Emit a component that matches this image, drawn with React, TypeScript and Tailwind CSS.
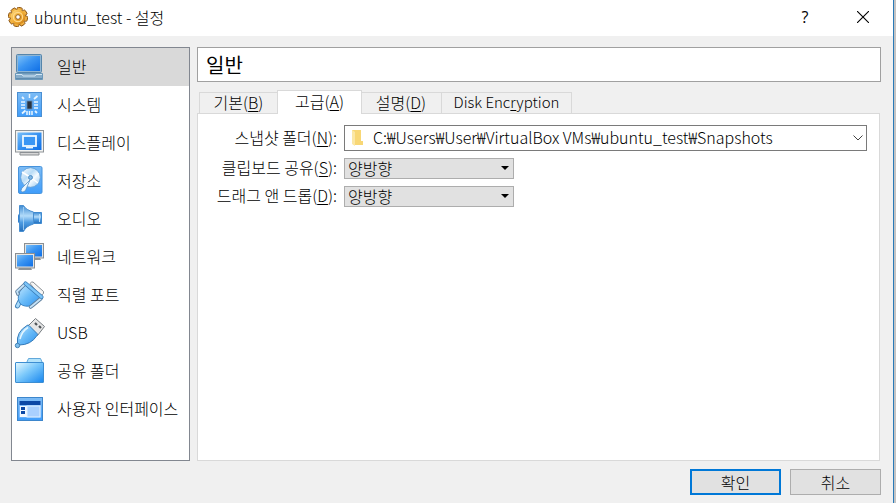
import { useState } from "react";
import type { ReactNode } from "react";

function Defs() {
  return (
    <svg className="absolute h-0 w-0" aria-hidden="true">
      <defs>
        <linearGradient id="screen" x1="0" y1="0" x2="1" y2="1">
          <stop offset="0" stopColor="#7cc0f8" />
          <stop offset="0.45" stopColor="#3b95f2" />
          <stop offset="1" stopColor="#0f6fe6" />
        </linearGradient>
        <linearGradient id="tile" x1="0" y1="0" x2="0" y2="1">
          <stop offset="0" stopColor="#7dbcf5" />
          <stop offset="1" stopColor="#3f9dfb" />
        </linearGradient>
        <linearGradient id="body" x1="0" y1="0" x2="1" y2="1">
          <stop offset="0" stopColor="#c4e8ff" />
          <stop offset="0.5" stopColor="#69bbf8" />
          <stop offset="1" stopColor="#2f92ee" />
        </linearGradient>
        <linearGradient id="cone" x1="0" y1="0" x2="0" y2="1">
          <stop offset="0" stopColor="#3c8ad2" />
          <stop offset="0.4" stopColor="#b4dcfa" />
          <stop offset="0.65" stopColor="#4e9ce2" />
          <stop offset="1" stopColor="#246fbc" />
        </linearGradient>
        <linearGradient id="folder" x1="0" y1="0" x2="1" y2="1">
          <stop offset="0" stopColor="#e8faff" />
          <stop offset="0.45" stopColor="#7cc9fb" />
          <stop offset="1" stopColor="#1685ee" />
        </linearGradient>
        <linearGradient id="disc" x1="0" y1="0" x2="1" y2="1">
          <stop offset="0" stopColor="#ffffff" />
          <stop offset="0.4" stopColor="#b9dcf6" />
          <stop offset="0.6" stopColor="#f5fbff" />
          <stop offset="1" stopColor="#8fc3ee" />
        </linearGradient>
        <linearGradient id="gear" x1="0" y1="0" x2="1" y2="1">
          <stop offset="0" stopColor="#ffe08a" />
          <stop offset="0.5" stopColor="#f2ad35" />
          <stop offset="1" stopColor="#c97a12" />
        </linearGradient>
      </defs>
    </svg>
  );
}

function Monitor({ x, y }: { x: number; y: number }) {
  return (
    <g transform={`translate(${x} ${y})`}>
      <path d="M4 15h12l1 2H3z" fill="#8f9498" />
      <rect x="0.5" y="0.5" width="19" height="14.5" fill="#e4e4e2" stroke="#8b8f93" />
      <rect x="2" y="2" width="16" height="11.5" fill="url(#screen)" />
    </g>
  );
}

const icons: Record<string, ReactNode> = {
  general: (
    <>
      <rect x="3.5" y="3.5" width="25" height="18" rx="1" fill="#8fb5d3" stroke="#5585ab" />
      <rect x="5" y="5" width="22" height="15" fill="url(#screen)" />
      <path d="M2.5 22.5h27v6h-27z" fill="#86acca" stroke="#6b98ba" />
      <path d="M3 23.5h6l1 1.500h12l1-1.500h6" fill="none" stroke="#d2e6f4" />
      <path d="M3 27.500h26" stroke="#5f8caf" />
    </>
  ),
  system: (
    <>
      <rect x="4.500" y="3.500" width="24" height="24" fill="url(#tile)" stroke="#4a8fd3" />
      <g stroke="#e9f6ff" strokeWidth="1.500" fill="none">
        <path d="M16.500 5v4M8 13h4M8 16h4M8 19h4M21 13h4M21 16h4M21 19h4M14 22v4M16.500 22v4M19 22v4" />
        <path d="M21 10l3.500-3M9 24.500l3.500-3M9 8l2 2M22 22l2 2" strokeWidth="1.800" />
      </g>
      <rect x="14" y="12" width="5" height="8" fill="#2a3440" stroke="#5c86ae" strokeWidth="0.800" />
    </>
  ),
  display: (
    <>
      <path d="M7 25.500h19v2.500H7z" fill="#d6d6d6" stroke="#898d90" />
      <rect x="2.500" y="3.500" width="28" height="21.500" fill="#f3f3f1" stroke="#8f9498" />
      <rect x="4.500" y="5.500" width="24" height="17.500" fill="url(#screen)" />
      <rect x="10" y="9" width="13" height="10" fill="#3a96f4" stroke="#eef8ff" strokeWidth="1.800" />
      <path d="M13 20.500h7" stroke="#eef8ff" strokeWidth="1.800" />
    </>
  ),
  storage: (
    <>
      <rect x="5.500" y="1.500" width="23.500" height="27" rx="1.500" fill="url(#tile)" stroke="#4693dc" />
      <circle cx="17.500" cy="12.500" r="9.800" fill="url(#disc)" stroke="#5a9bd4" strokeWidth="0.800" />
      <path d="M17 12L9 7M17 12l8 6" stroke="#fff" strokeWidth="1.500" />
      <circle cx="17.500" cy="12.500" r="2" fill="#7fb6e4" stroke="#397fbd" strokeWidth="0.800" />
      <path d="M17 15L12.500 25.500Q9 28.500 8 25.500Q8 23.500 11 21z" fill="#e9f6ff" stroke="#5591c5" strokeWidth="0.800" />
    </>
  ),
  audio: (
    <>
      <rect x="5" y="11" width="4" height="9" rx="1.500" fill="#2f7fce" />
      <path d="M20 9.500h8.500v11H20z" fill="url(#cone)" stroke="#3f8ad0" />
      <path d="M6.500 2.500h4Q13 7 20.500 9v12Q13 23 10.500 28.500h-4z" fill="url(#cone)" stroke="#4a8fd0" />
      <path d="M10.500 4v23" stroke="#a9d5f8" strokeWidth="0.800" />
      <path d="M26.500 11v8" stroke="#b7defb" />
    </>
  ),
  network: (
    <>
      <Monitor x={11} y={2} />
      <Monitor x={2} y={12} />
    </>
  ),
  serial: (
    <>
      <path d="M17 4.500q1.500-2 3-1.500L30.500 12.500v2l-3 2.500z" fill="#f5f5f5" stroke="#898f94" />
      <path d="M7 22l-2.500 5" stroke="#4584bb" strokeWidth="5" strokeLinecap="round" />
      <path d="M7 22l-2.500 5" stroke="#a9dbfb" strokeWidth="3" strokeLinecap="round" />
      <path d="M12 6L27 18.500Q25 24 19 26.500Q12 28.500 7.500 25Q3.500 20 6.500 13z" fill="url(#body)" stroke="#3a86c8" />
      <path d="M11 6L4 12.500l1 2.500M28 19.500L19.500 26.500l-2 1.500" stroke="#5f7f9c" strokeWidth="3.600" strokeLinecap="round" strokeLinejoin="round" fill="none" />
      <path d="M11 6L4 12.500l1 2.500M28 19.500L19.500 26.500l-2 1.500" stroke="#c4e2f8" strokeWidth="1.800" strokeLinecap="round" strokeLinejoin="round" fill="none" />
      <path d="M12.500 4.500L28.500 18" stroke="#3a7db8" strokeWidth="4.200" strokeLinecap="round" />
      <path d="M12.500 4.500L28.500 18" stroke="#7cc4f7" strokeWidth="2.600" strokeLinecap="round" />
    </>
  ),
  usb: (
    <>
      <path d="M22.500 1.500l9 8-7 9-10-9z" fill="#e6e6e6" stroke="#777d82" />
      <path d="M22 6l2 2M26 9l2 2" stroke="#4e5357" strokeWidth="2.200" />
      <path d="M14 8.500q1-1 2 0l8 8q1 1 0 2Q18 28 6 28L4.500 26.500Q3 15 14 8.500z" fill="url(#body)" stroke="#347ab8" />
      <path d="M7 22Q9 14 15 10.500" stroke="#e3f6ff" strokeWidth="1.500" fill="none" />
      <circle cx="4.500" cy="28.500" r="2.200" fill="#7fc0ee" stroke="#4281b5" />
    </>
  ),
  folder: (
    <>
      <path d="M13.500 8l2-4.500h12l2 4.500z" fill="#b3e3fb" stroke="#62a8da" />
      <rect x="2.500" y="7.500" width="28" height="20" rx="0.500" fill="url(#folder)" stroke="#3d8ed2" />
    </>
  ),
  ui: (
    <>
      <rect x="4.500" y="4.500" width="25" height="23" fill="url(#tile)" stroke="#3d86cc" />
      <rect x="6" y="7.500" width="22" height="17" fill="#7fbcfb" />
      <rect x="6.500" y="8" width="21" height="4" fill="#0c48a6" />
      <rect x="7" y="13" width="7" height="11" fill="#f2f8ff" />
      <rect x="14" y="13" width="13" height="11" fill="#a9d0ff" stroke="#e1f0ff" />
      <path d="M8 14h4v3H8zM8 18h4v3H8z" fill="#0c48a6" />
    </>
  ),
};

const categories = [
  ["general", "일반"],
  ["system", "시스템"],
  ["display", "디스플레이"],
  ["storage", "저장소"],
  ["audio", "오디오"],
  ["network", "네트워크"],
  ["serial", "직렬 포트"],
  ["usb", "USB"],
  ["folder", "공유 폴더"],
  ["ui", "사용자 인터페이스"],
];

function GearIcon() {
  const teeth = [0, 45, 90, 135, 180, 225, 270, 315];
  return (
    <svg viewBox="0 0 20 20" className="size-5 shrink-0" aria-hidden="true">
      {teeth.map((a) => (
        <rect key={a} x="7.400" y="0.400" width="5.200" height="5" rx="1.200" fill="#efb040" stroke="#8a5213" strokeWidth="0.900" transform={`rotate(${a + 12} 10 10)`} />
      ))}
      <circle cx="10" cy="10" r="7.400" fill="url(#gear)" />
      <circle cx="10" cy="10" r="4.600" fill="none" stroke="#ffd98a" strokeWidth="1.200" />
      <circle cx="10" cy="10" r="2.300" fill="#fff" stroke="#8a5213" strokeWidth="0.900" />
    </svg>
  );
}

function Mnemonic({ text, letter }: { text: string; letter: string }) {
  return (
    <>
      {text}(<span className="underline underline-offset-2">{letter}</span>)
    </>
  );
}

function Tab({ active, onClick, children }: { active: boolean; onClick: () => void; children: ReactNode }) {
  return (
    <button
      type="button"
      role="tab"
      aria-selected={active}
      onClick={onClick}
      className={
        active
          ? "z-10 -mx-px -mb-px h-6 border border-b-0 border-[#d9d9d9] bg-white px-3 pb-1 leading-5"
          : "h-[21px] border border-b-0 border-l-0 border-[#d9d9d9] bg-[#f0f0f0] px-2 pb-0.5 leading-[18px] first:border-l last:text-[15px]"
      }
    >
      {children}
    </button>
  );
}

function ModeRow({ id, text, letter }: { id: string; text: string; letter: string }) {
  return (
    <>
      <label htmlFor={id} className="pb-1 text-right leading-4">
        <Mnemonic text={text} letter={letter} />:
      </label>
      <div className="relative w-[170px]">
        <select id={id} defaultValue="both" className="block h-[21px] w-full appearance-none border border-[#adadad] bg-[#e1e1e1] pb-px pl-[3px] leading-[18px]">
          <option value="off">사용 안 함</option>
          <option value="both">양방향</option>
        </select>
        <svg viewBox="0 0 8 4" className="pointer-events-none absolute top-2 right-[5px] h-1 w-2" aria-hidden="true">
          <path d="M0 0h8L4 4z" fill="#000" />
        </svg>
      </div>
    </>
  );
}

export default function App() {
  const [category, setCategory] = useState("general");
  const [tab, setTab] = useState("advanced");
  return (
    <div className="flex min-h-screen bg-[#c4c4c4] font-['Noto_Sans_CJK_KR',sans-serif] text-base font-light text-black">
      <Defs />
      <div className="flex flex-1 flex-col border-r border-[#2a7ab8] bg-[#f0f0f0]">
        <header className="flex h-9 items-center bg-white pb-0.5 pl-2">
          <GearIcon />
          <h1 className="ml-1.5 flex-1 text-base">ubuntu_test - 설정</h1>
          <button type="button" aria-label="도움말" className="h-8 w-14 font-['Open_Sans',sans-serif] text-base font-normal">
            ?
          </button>
          <button type="button" aria-label="닫기" className="flex h-8 w-[60px] items-center justify-center">
            <svg viewBox="0 0 12 12" className="size-3" aria-hidden="true">
              <path d="M0 0l12 12M12 0L0 12" stroke="#000" strokeWidth="1.100" />
            </svg>
          </button>
        </header>

        <div className="flex flex-1 gap-[7px] pt-[11px] pr-3 pl-[11px]">
          <nav className="w-[179px] shrink-0 border border-[#828790] bg-white">
            {categories.map(([id, name]) => (
              <button
                key={id}
                type="button"
                onClick={() => setCategory(id)}
                className={
                  "flex h-[38px] w-full items-center gap-3 pl-px text-left whitespace-nowrap " +
                  (id === category ? "bg-[#d9d9d9]" : "bg-white")
                }
              >
                <svg viewBox="0 0 32 32" className="size-8 shrink-0" aria-hidden="true">
                  {icons[id]}
                </svg>
                <span className="pb-0.5">{name}</span>
              </button>
            ))}
          </nav>

          <main className="flex min-w-0 flex-1 flex-col">
            <h2 className="h-[35px] border border-[#a0a0a0] bg-white px-2 text-xl leading-[34px] font-normal">일반</h2>
            <div role="tablist" className="mt-2 grid grid-cols-[79px_83px_81px_130px] items-end pl-0.5 whitespace-nowrap">
              <Tab active={tab === "basic"} onClick={() => setTab("basic")}>
                <Mnemonic text="기본" letter="B" />
              </Tab>
              <Tab active={tab === "advanced"} onClick={() => setTab("advanced")}>
                <Mnemonic text="고급" letter="A" />
              </Tab>
              <Tab active={tab === "description"} onClick={() => setTab("description")}>
                <Mnemonic text="설명" letter="D" />
              </Tab>
              <Tab active={tab === "encryption"} onClick={() => setTab("encryption")}>
                Disk Enc<span className="underline underline-offset-2">r</span>yption
              </Tab>
            </div>
            <section role="tabpanel" className="mr-px flex-1 border border-[#d9d9d9] bg-white pt-[11px] pr-3 pl-2">
              <div className="grid grid-cols-[131px_1fr] items-center gap-x-[7px] gap-y-[7px] whitespace-nowrap">
                <label htmlFor="snapshots" className="pb-0.5 text-right leading-5">
                  <Mnemonic text="스냅샷 폴더" letter="N" />:
                </label>
                <div className="relative">
                  <select id="snapshots" className="block h-[26px] w-full appearance-none border border-[#7a7a7a] bg-white pb-0.5 pl-7 text-base leading-[22px]">
                    <option>C:₩Users₩User₩VirtualBox VMs₩ubuntu_test₩Snapshots</option>
                  </select>
                  <svg viewBox="0 0 12 16" className="pointer-events-none absolute top-[5px] left-[7px] h-4 w-3" aria-hidden="true">
                    <path d="M1 0h9v11h2v4H3L1 13z" fill="#f8d775" />
                    <path d="M1 0l3 2v14l-3-2z" fill="#fbe7a6" />
                  </svg>
                  <svg viewBox="0 0 10 6" className="pointer-events-none absolute top-[10px] right-1 h-1.5 w-2.5" aria-hidden="true">
                    <path d="M.5.5L5 5 9.500.5" fill="none" stroke="#444" />
                  </svg>
                </div>
                <ModeRow id="clipboard" text="클립보드 공유" letter="S" />
                <ModeRow id="dragdrop" text="드래그 앤 드롭" letter="D" />
              </div>
            </section>
          </main>
        </div>

        <footer className="flex justify-end gap-[9px] pt-2 pr-3 pb-2">
          <button type="button" className="h-[26px] w-[91px] border-2 border-[#0078d7] bg-[#e1e1e1] leading-5">
            확인
          </button>
          <button type="button" className="h-[26px] w-[91px] border border-[#adadad] bg-[#e1e1e1] leading-5">
            취소
          </button>
        </footer>
      </div>
      <div className="w-0.5" />
    </div>
  );
}
